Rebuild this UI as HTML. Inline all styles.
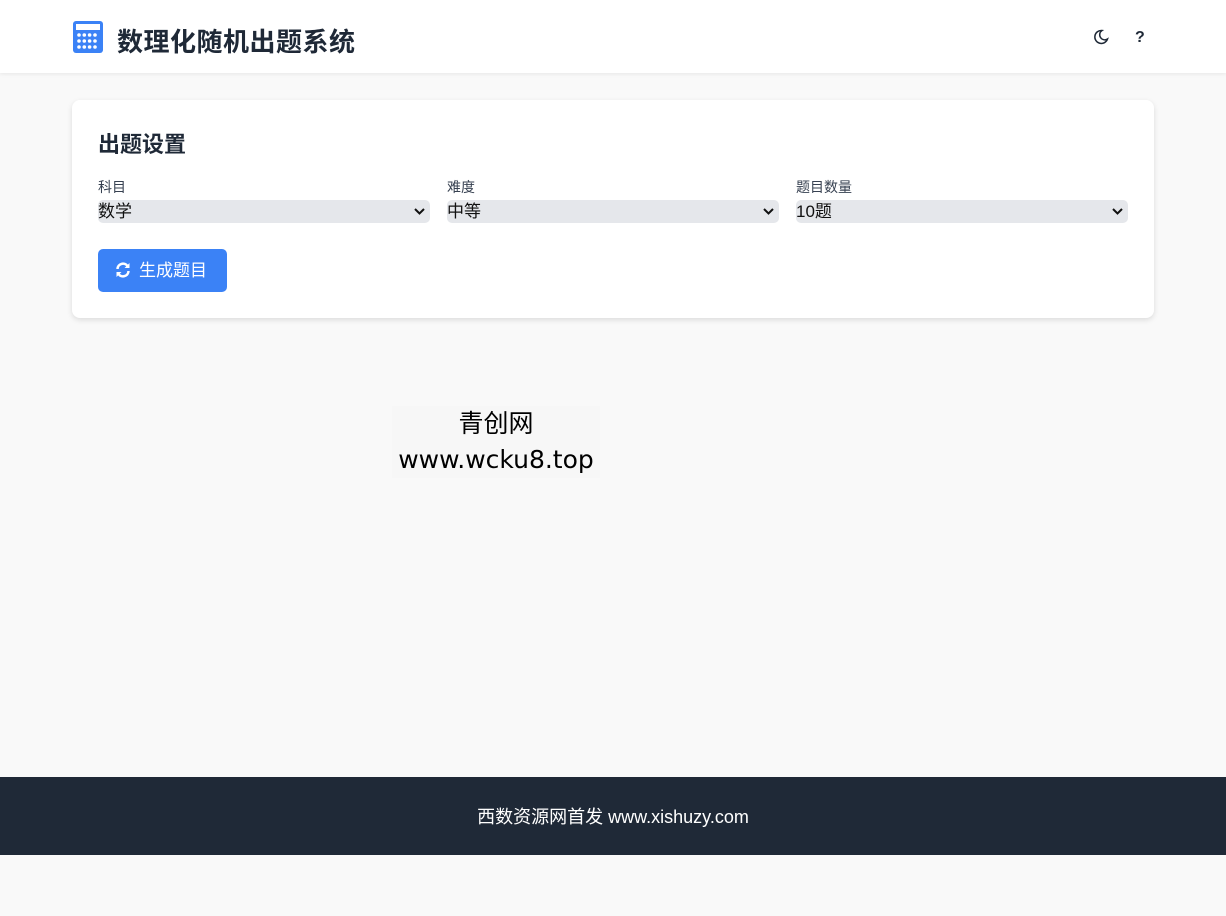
<!DOCTYPE html>
<html><head><meta charset="utf-8"><style>
*{box-sizing:border-box;margin:0;padding:0}
body{width:1226px;height:916px;background:#f9f9f9;font-family:"Liberation Sans","Noto Sans CJK SC",sans-serif;position:relative;overflow:hidden}
header{position:absolute;left:0;top:0;width:1226px;height:73px;background:#fff;box-shadow:0 1px 4px rgba(0,0,0,.08)}
.logo{position:absolute;left:72px;top:20px}
.title{position:absolute;left:117px;top:22px;font-size:26px;letter-spacing:0.5px;font-weight:bold;color:#1f2937}
.card{position:absolute;left:72px;top:100px;width:1082px;height:218px;background:#fff;border-radius:8px;box-shadow:0 2px 6px rgba(0,0,0,.12)}
.card h2{position:absolute;left:26px;top:27px;font-size:22px;font-weight:bold;color:#1f2937}
.f{position:absolute;top:77px;width:332px}
.f label{display:block;font-size:14px;color:#374151;height:23px}
.sel{height:23px;background:#e5e7eb;border-radius:5px;font-size:17px;color:#111;line-height:23px;position:relative}
.sel svg{position:absolute;right:5px;top:8px}
.btn{position:absolute;left:26px;top:149px;width:129px;height:43px;background:#3b82f6;border-radius:5px;color:#fff;font-size:17px;line-height:43px;padding-left:41px}
.btn svg{position:absolute;left:17px;top:13px}
.wm{position:absolute;left:392px;top:406px;width:208px;height:72px;background:#f7f7f7;text-align:center;font-size:27px;line-height:36px;color:#000;font-family:"DejaVu Sans","Noto Sans CJK SC",sans-serif;font-size:25px}
footer{position:absolute;left:0;top:777px;width:1226px;height:78px;background:#1f2937;color:#fff;font-size:18px;text-align:center;line-height:80px}
</style></head><body>
<header>
<svg class="logo" width="32" height="34" viewBox="0 0 32 34"><rect x="1" y="1" width="30" height="32" rx="3" fill="#3b82f6"/><rect x="4" y="4" width="24" height="6" fill="#fff"/><g fill="#fff"><circle cx="7" cy="15" r="1.8"/><circle cx="12.3" cy="15" r="1.8"/><circle cx="17.6" cy="15" r="1.8"/><circle cx="23" cy="15" r="1.8"/><circle cx="7" cy="21" r="1.8"/><circle cx="12.3" cy="21" r="1.8"/><circle cx="17.6" cy="21" r="1.8"/><circle cx="23" cy="21" r="1.8"/><circle cx="7" cy="27" r="1.8"/><circle cx="12.3" cy="27" r="1.8"/><circle cx="17.6" cy="27" r="1.8"/><circle cx="23" cy="27" r="1.8"/></g></svg>
<div class="title">数理化随机出题系统</div>
<svg style="position:absolute;left:1093px;top:29px" width="16" height="16" viewBox="0 0 16 16"><path d="M9 1.5A6.5 6.5 0 1 0 14.5 10 5 5 0 0 1 9 1.5z" fill="none" stroke="#1f2937" stroke-width="1.5"/></svg>
<div style="position:absolute;left:1135px;top:29px;font-size:16px;font-weight:bold;color:#1f2937">?</div>
</header>
<div class="card">
<h2>出题设置</h2>
<div class="f" style="left:26px"><label>科目</label><div class="sel">数学<svg width="11" height="7" viewBox="0 0 11 7"><path d="M1 1l4.5 4.5L10 1" fill="none" stroke="#111" stroke-width="2"/></svg></div></div>
<div class="f" style="left:375px"><label>难度</label><div class="sel">中等<svg width="11" height="7" viewBox="0 0 11 7"><path d="M1 1l4.5 4.5L10 1" fill="none" stroke="#111" stroke-width="2"/></svg></div></div>
<div class="f" style="left:724px"><label>题目数量</label><div class="sel">10题<svg width="11" height="7" viewBox="0 0 11 7"><path d="M1 1l4.5 4.5L10 1" fill="none" stroke="#111" stroke-width="2"/></svg></div></div>
<div class="btn"><svg width="16" height="16" viewBox="0 0 16 16"><path d="M2.5 7A5.5 5.5 0 0 1 12.5 4M13.5 9A5.5 5.5 0 0 1 3.5 12" fill="none" stroke="#fff" stroke-width="2.5"/><path d="M14.5 1v5h-5zM1.5 15v-5h5z" fill="#fff"/></svg>生成题目</div>
</div>
<div class="wm">青创网<br>www.wcku8.top</div>
<footer>西数资源网首发 www.xishuzy.com</footer>
</body></html>
